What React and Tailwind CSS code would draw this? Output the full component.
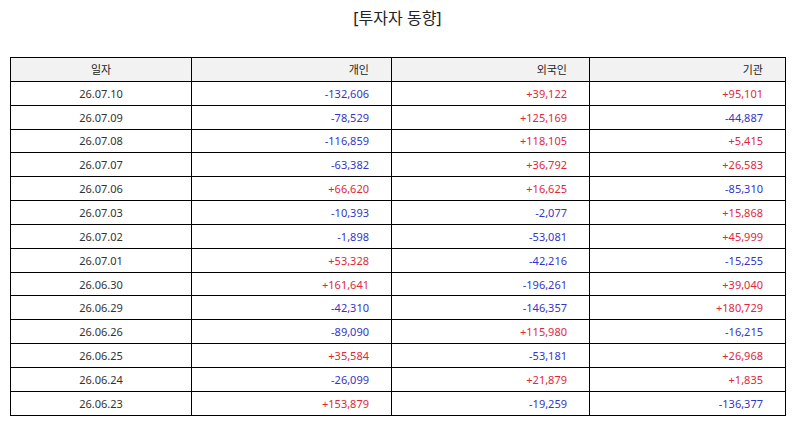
const ROWS = [
  ["26.07.10", "-132,606", "+39,122", "+95,101"],
  ["26.07.09", "-78,529", "+125,169", "-44,887"],
  ["26.07.08", "-116,859", "+118,105", "+5,415"],
  ["26.07.07", "-63,382", "+36,792", "+26,583"],
  ["26.07.06", "+66,620", "+16,625", "-85,310"],
  ["26.07.03", "-10,393", "-2,077", "+15,868"],
  ["26.07.02", "-1,898", "-53,081", "+45,999"],
  ["26.07.01", "+53,328", "-42,216", "-15,255"],
  ["26.06.30", "+161,641", "-196,261", "+39,040"],
  ["26.06.29", "-42,310", "-146,357", "+180,729"],
  ["26.06.26", "-89,090", "+115,980", "-16,215"],
  ["26.06.25", "+35,584", "-53,181", "+26,968"],
  ["26.06.24", "-26,099", "+21,879", "+1,835"],
  ["26.06.23", "+153,879", "-19,259", "-136,377"],
];

const font = { fontFamily: '"Noto Sans", "Noto Sans CJK KR", sans-serif' };

function Num({ value }) {
  const up = value.startsWith("+");
  return (
    <td
      className={`border border-black h-[23.85px] p-0 pr-[22px] text-right ${
        up ? "text-[#e0283c]" : "text-[#3535c8]"
      }`}
    >
      {value}
    </td>
  );
}

export default function App() {
  return (
    <div
      className="w-[795px] h-[425px] bg-white pt-[6px] text-[#333]"
      style={font}
    >
      <h1 className="text-center text-[16px] leading-[24px] text-[#222]">
        [투자자 동향]
      </h1>
      <table className="mt-[27px] ml-[10px] w-[775px] table-fixed border-collapse text-[11px] leading-none">
        <colgroup>
          <col className="w-[181px]" />
          <col className="w-[200px]" />
          <col className="w-[198px]" />
          <col className="w-[196px]" />
        </colgroup>
        <thead>
          <tr className="bg-[#f2f2f2] text-[#222]">
            <th className="border border-black h-[23.85px] p-0 font-normal text-center">
              일자
            </th>
            <th className="border border-black h-[23.85px] p-0 pr-[22px] font-normal text-right">
              개인
            </th>
            <th className="border border-black h-[23.85px] p-0 pr-[22px] font-normal text-right">
              외국인
            </th>
            <th className="border border-black h-[23.85px] p-0 pr-[22px] font-normal text-right">
              기관
            </th>
          </tr>
        </thead>
        <tbody>
          {ROWS.map((r) => (
            <tr key={r[0]}>
              <td className="border border-black h-[23.85px] p-0 text-center">
                {r[0]}
              </td>
              <Num value={r[1]} />
              <Num value={r[2]} />
              <Num value={r[3]} />
            </tr>
          ))}
        </tbody>
      </table>
    </div>
  );
}
